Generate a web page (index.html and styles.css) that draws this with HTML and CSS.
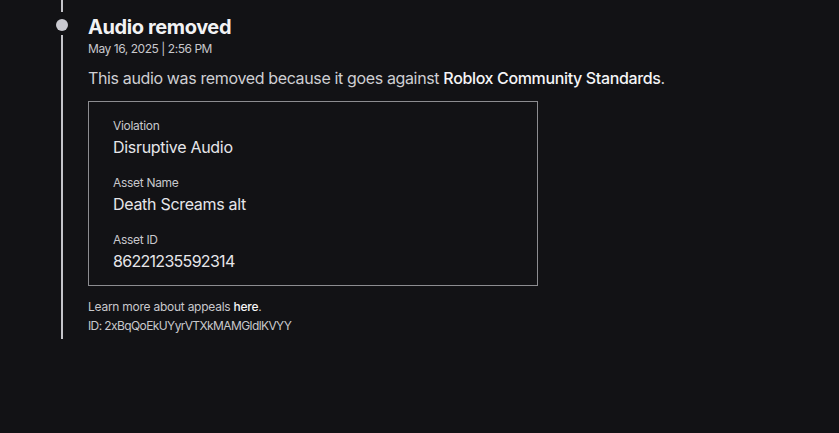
FILE: index.html
```html
<!DOCTYPE html>
<html>
<head>
<meta charset="utf-8">
<link rel="stylesheet" href="styles.css">
</head>
<body>
<div class="entry">
  <div class="rail">
    <div class="line line-top"></div>
    <div class="dot"></div>
    <div class="line line-bottom"></div>
  </div>
  <div class="content">
    <h1 class="title">Audio removed</h1>
    <div class="date">May 16, 2025 | 2:56 PM</div>
    <p class="desc">This audio was removed because it goes against <strong>Roblox Community Standards</strong>.</p>
    <div class="card">
      <div class="field">
        <div class="label">Violation</div>
        <div class="value">Disruptive Audio</div>
      </div>
      <div class="field">
        <div class="label">Asset Name</div>
        <div class="value">Death Screams alt</div>
      </div>
      <div class="field">
        <div class="label">Asset ID</div>
        <div class="value value-num">86221235592314</div>
      </div>
    </div>
    <div class="foot">
      <div class="foot-learn">Learn more about appeals <strong>here</strong>.</div>
      <div class="foot-id">ID: 2xBqQoEkUYyrVTXkMAMGldlKVYY</div>
    </div>
  </div>
</div>
</body>
</html>
```

FILE: styles.css
```css
html, body {
  margin: 0;
  background: #121215;
  height: 100%;
}
body {
  font-family: Inter, "Noto Sans", sans-serif;
  color: #d5d5d9;
}
.entry {
  display: flex;
  padding-left: 56px;
}
.rail {
  width: 12px;
  display: flex;
  flex-direction: column;
  align-items: center;
  height: 339px;
}
.line {
  width: 2px;
  background: #c4c4c9;
}
.line-top { height: 12px; }
.line-bottom { flex: 1; margin-top: 4px; }
.dot {
  width: 12px;
  height: 12px;
  border-radius: 50%;
  background: #c9c9d0;
  margin-top: 7px;
}
.content {
  margin-left: 20px;
  padding-top: 15px;
}
.title {
  margin: 0;
  font-size: 20px;
  line-height: 25px;
  font-weight: 700;
  letter-spacing: -0.4px;
  color: #f2f2f4;
}
.date {
  font-size: 12px;
  line-height: 16px;
  margin-top: 1px;
  letter-spacing: -0.45px;
  color: #c8c8cc;
}
.desc {
  margin: 10px 0 0;
  font-size: 16px;
  line-height: 22px;
  letter-spacing: -0.36px;
  color: #cfcfd3;
}
.desc strong, .foot strong {
  font-weight: 500;
  color: #f5f5f7;
}
.card {
  margin-top: 12px;
  border: 1px solid #8c8c90;
  padding: 16px 24px 12px;
  box-sizing: border-box;
  width: 450px;
}
.field + .field { margin-top: 16px; }
.label {
  font-size: 12px;
  line-height: 16px;
  letter-spacing: -0.3px;
  color: #c8c8cc;
}
.value {
  font-size: 16px;
  line-height: 24px;
  letter-spacing: -0.3px;
  color: #e6e6ea;
  margin-top: 1px;
}
.value-num { letter-spacing: -0.7px; }
.foot {
  margin-top: 11px;
  font-size: 12px;
  line-height: 19px;
  color: #c8c8cc;
}
.foot-learn { letter-spacing: -0.25px; }
.foot-id { letter-spacing: -0.6px; }
```
